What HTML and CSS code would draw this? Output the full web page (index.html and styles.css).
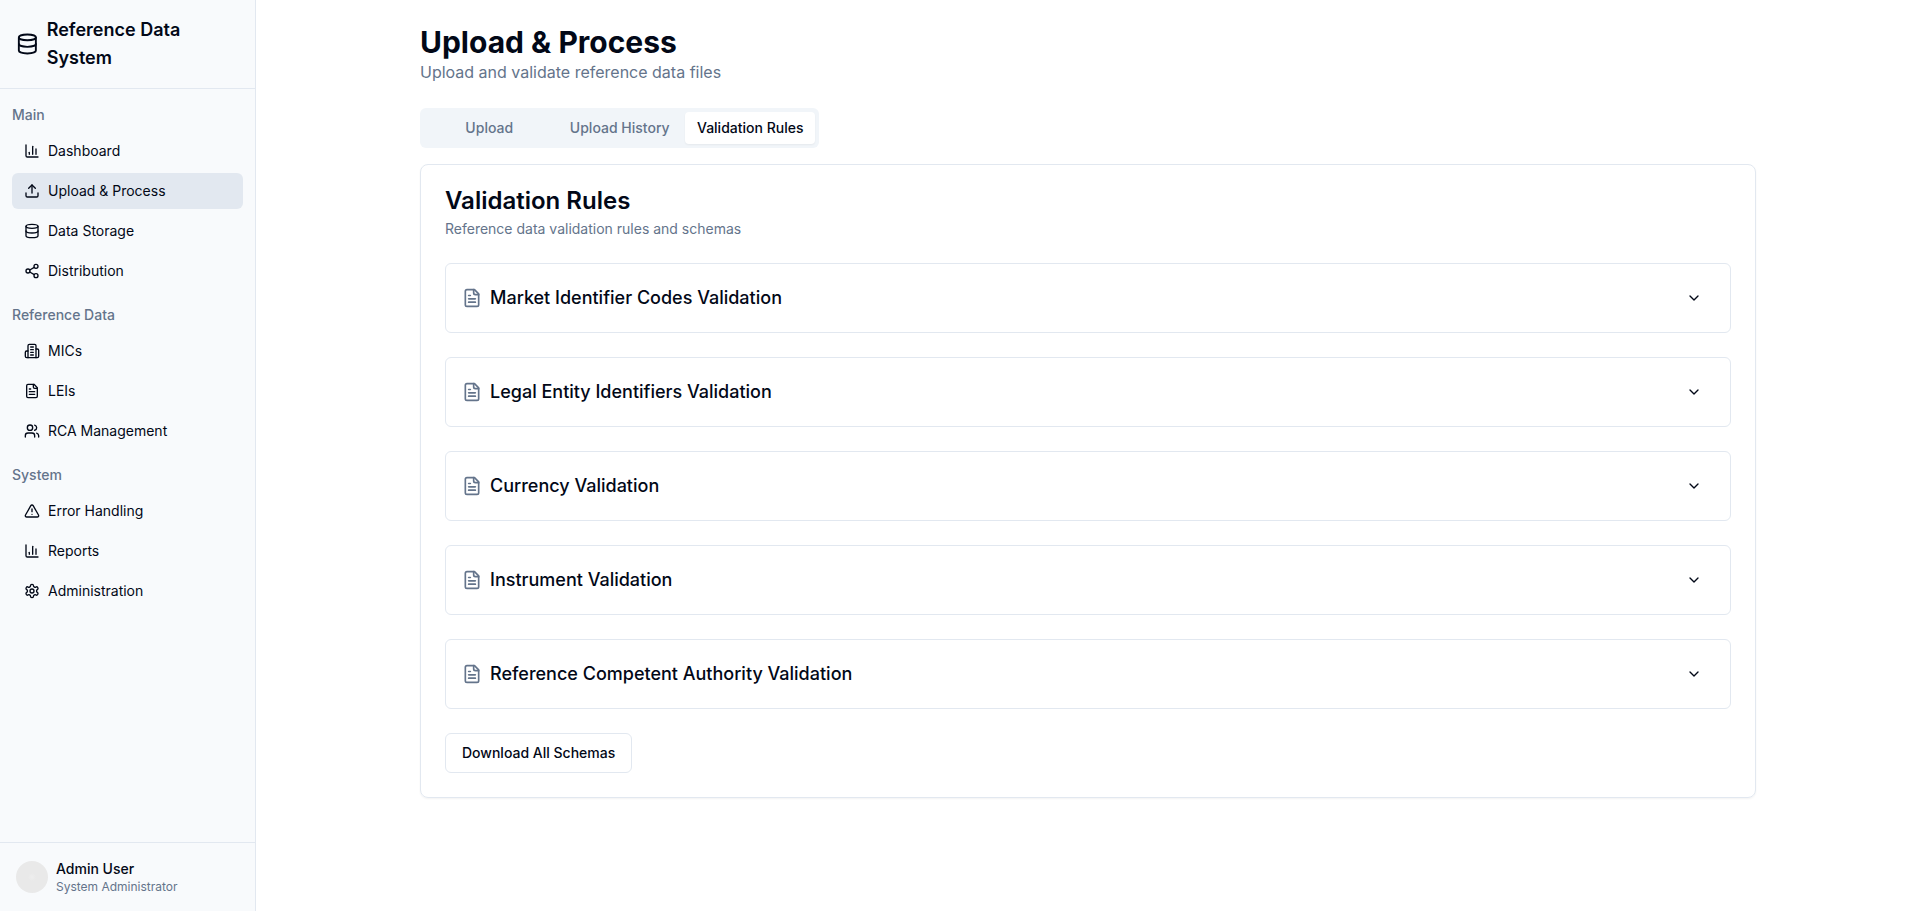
FILE: index.html
```html
<!DOCTYPE html>
<html lang="en">
<head>
<meta charset="utf-8">
<meta name="viewport" content="width=device-width, initial-scale=1">
<title>Reference Data System</title>
<link rel="stylesheet" href="styles.css">
</head>
<body>
<svg class="sprite" aria-hidden="true">
  <symbol id="database" viewBox="0 0 24 24"><ellipse cx="12" cy="5" rx="9" ry="3"/><path d="M3 5V19A9 3 0 0 0 21 19V5"/><path d="M3 12A9 3 0 0 0 21 12"/></symbol>
  <symbol id="chart" viewBox="0 0 24 24"><path d="M3 3v16a2 2 0 0 0 2 2h16"/><path d="M18 17V9"/><path d="M13 17V5"/><path d="M8 17v-3"/></symbol>
  <symbol id="upload" viewBox="0 0 24 24"><path d="M21 15v4a2 2 0 0 1-2 2H5a2 2 0 0 1-2-2v-4"/><path d="m17 8-5-5-5 5"/><path d="M12 3v12"/></symbol>
  <symbol id="share" viewBox="0 0 24 24"><circle cx="18" cy="5" r="3"/><circle cx="6" cy="12" r="3"/><circle cx="18" cy="19" r="3"/><path d="m8.59 13.51 6.83 3.98"/><path d="m15.41 6.51-6.82 3.98"/></symbol>
  <symbol id="building" viewBox="0 0 24 24"><path d="M6 22V4a2 2 0 0 1 2-2h8a2 2 0 0 1 2 2v18Z"/><path d="M6 12H4a2 2 0 0 0-2 2v6a2 2 0 0 0 2 2h2"/><path d="M18 9h2a2 2 0 0 1 2 2v9a2 2 0 0 1-2 2h-2"/><path d="M10 6h4"/><path d="M10 10h4"/><path d="M10 14h4"/><path d="M10 18h4"/></symbol>
  <symbol id="file" viewBox="0 0 24 24"><path d="M15 2H6a2 2 0 0 0-2 2v16a2 2 0 0 0 2 2h12a2 2 0 0 0 2-2V7Z"/><path d="M14 2v4a2 2 0 0 0 2 2h4"/><path d="M10 9H8"/><path d="M16 13H8"/><path d="M16 17H8"/></symbol>
  <symbol id="users" viewBox="0 0 24 24"><path d="M16 21v-2a4 4 0 0 0-4-4H6a4 4 0 0 0-4 4v2"/><circle cx="9" cy="7" r="4"/><path d="M22 21v-2a4 4 0 0 0-3-3.87"/><path d="M16 3.13a4 4 0 0 1 0 7.75"/></symbol>
  <symbol id="users-round" viewBox="0 0 24 24"><path d="M18 21a8 8 0 0 0-16 0"/><circle cx="10" cy="8" r="5"/><path d="M22 20c0-3.37-2-6.5-4-8a5 5 0 0 0-.45-8.3"/></symbol>
  <symbol id="alert" viewBox="0 0 24 24"><path d="m21.73 18-8-14a2 2 0 0 0-3.48 0l-8 14A2 2 0 0 0 4 21h16a2 2 0 0 0 1.73-3"/><path d="M12 9v4"/><path d="M12 17h.01"/></symbol>
  <symbol id="settings" viewBox="0 0 24 24"><path d="M12.22 2h-.44a2 2 0 0 0-2 2v.18a2 2 0 0 1-1 1.73l-.43.25a2 2 0 0 1-2 0l-.15-.08a2 2 0 0 0-2.73.73l-.22.38a2 2 0 0 0 .73 2.73l.15.1a2 2 0 0 1 1 1.72v.51a2 2 0 0 1-1 1.74l-.15.09a2 2 0 0 0-.73 2.73l.22.38a2 2 0 0 0 2.73.73l.15-.08a2 2 0 0 1 2 0l.43.25a2 2 0 0 1 1 1.73V20a2 2 0 0 0 2 2h.44a2 2 0 0 0 2-2v-.18a2 2 0 0 1 1-1.73l.43-.25a2 2 0 0 1 2 0l.15.08a2 2 0 0 0 2.73-.73l.22-.39a2 2 0 0 0-.73-2.73l-.15-.08a2 2 0 0 1-1-1.74v-.5a2 2 0 0 1 1-1.74l.15-.09a2 2 0 0 0 .73-2.73l-.22-.38a2 2 0 0 0-2.73-.73l-.15.08a2 2 0 0 1-2 0l-.43-.25a2 2 0 0 1-1-1.73V4a2 2 0 0 0-2-2z"/><circle cx="12" cy="12" r="3"/></symbol>
  <symbol id="chevron" viewBox="0 0 24 24"><path d="m6 9 6 6 6-6"/></symbol>
</svg>
<div class="app">
  <aside class="sidebar">
    <div class="brand">
      <svg class="brand-icon"><use href="#database"/></svg>
      <span class="brand-name">Reference Data System</span>
    </div>
    <nav class="nav">
      <section class="nav-group">
        <h2 class="nav-label">Main</h2>
        <a class="nav-item" href="#dashboard"><svg class="icon"><use href="#chart"/></svg>Dashboard</a>
        <a class="nav-item active" href="#upload-process" aria-current="page"><svg class="icon"><use href="#upload"/></svg>Upload &amp; Process</a>
        <a class="nav-item" href="#storage"><svg class="icon"><use href="#database"/></svg>Data Storage</a>
        <a class="nav-item" href="#distribution"><svg class="icon"><use href="#share"/></svg>Distribution</a>
      </section>
      <section class="nav-group">
        <h2 class="nav-label">Reference Data</h2>
        <a class="nav-item" href="#mics"><svg class="icon"><use href="#building"/></svg>MICs</a>
        <a class="nav-item" href="#leis"><svg class="icon"><use href="#file"/></svg>LEIs</a>
        <a class="nav-item" href="#rca"><svg class="icon"><use href="#users"/></svg>RCA Management</a>
      </section>
      <section class="nav-group">
        <h2 class="nav-label">System</h2>
        <a class="nav-item" href="#errors"><svg class="icon"><use href="#alert"/></svg>Error Handling</a>
        <a class="nav-item" href="#reports"><svg class="icon"><use href="#chart"/></svg>Reports</a>
        <a class="nav-item" href="#administration"><svg class="icon"><use href="#settings"/></svg>Administration</a>
      </section>
    </nav>
    <div class="user">
      <span class="avatar"></span>
      <div class="user-text">
        <p class="user-name">Admin User</p>
        <p class="user-role">System Administrator</p>
      </div>
    </div>
  </aside>
  <main class="main">
    <div class="container">
      <header class="page-header">
        <h1 class="page-title">Upload &amp; Process</h1>
        <p class="page-subtitle">Upload and validate reference data files</p>
      </header>
      <div class="tabs" role="tablist">
        <button class="tab" type="button" role="tab" aria-selected="false">Upload</button>
        <button class="tab" type="button" role="tab" aria-selected="false">Upload History</button>
        <button class="tab selected" type="button" role="tab" aria-selected="true">Validation Rules</button>
      </div>
      <section class="card">
        <header class="card-header">
          <h2 class="card-title">Validation Rules</h2>
          <p class="card-subtitle">Reference data validation rules and schemas</p>
        </header>
        <div class="rules">
          <div class="rule"><svg class="rule-icon"><use href="#file"/></svg><h3 class="rule-name">Market Identifier Codes Validation</h3><button class="toggle" type="button" aria-label="Expand Market Identifier Codes Validation"><svg class="icon"><use href="#chevron"/></svg></button></div>
          <div class="rule"><svg class="rule-icon"><use href="#file"/></svg><h3 class="rule-name">Legal Entity Identifiers Validation</h3><button class="toggle" type="button" aria-label="Expand Legal Entity Identifiers Validation"><svg class="icon"><use href="#chevron"/></svg></button></div>
          <div class="rule"><svg class="rule-icon"><use href="#file"/></svg><h3 class="rule-name">Currency Validation</h3><button class="toggle" type="button" aria-label="Expand Currency Validation"><svg class="icon"><use href="#chevron"/></svg></button></div>
          <div class="rule"><svg class="rule-icon"><use href="#file"/></svg><h3 class="rule-name">Instrument Validation</h3><button class="toggle" type="button" aria-label="Expand Instrument Validation"><svg class="icon"><use href="#chevron"/></svg></button></div>
          <div class="rule"><svg class="rule-icon"><use href="#file"/></svg><h3 class="rule-name">Reference Competent Authority Validation</h3><button class="toggle" type="button" aria-label="Expand Reference Competent Authority Validation"><svg class="icon"><use href="#chevron"/></svg></button></div>
          <button class="download" type="button">Download All Schemas</button>
        </div>
      </section>
    </div>
  </main>
</div>
</body>
</html>
```
FILE: styles.css
```css
:root {
  --ink: #020817;
  --muted: #64748b;
  --line: #e2e8f0;
  --panel: #f8fafc;
  --soft: #f1f5f9;
}

*,
*::before,
*::after {
  box-sizing: border-box;
}

body {
  margin: 0;
  background: #fff;
  color: var(--ink);
  font-family: Inter, "Liberation Sans", sans-serif;
  font-size: 16px;
  line-height: 24px;
}

h1, h2, h3, p {
  margin: 0;
}

button {
  font: inherit;
  color: inherit;
  cursor: pointer;
}

svg {
  display: block;
  fill: none;
  stroke: currentColor;
  stroke-width: 2;
  stroke-linecap: round;
  stroke-linejoin: round;
}

.sprite {
  display: none;
}

.icon {
  flex: none;
  width: 16px;
  height: 16px;
}

.app {
  display: flex;
  min-height: 100vh;
}

/* Sidebar */
.sidebar {
  display: flex;
  flex: none;
  flex-direction: column;
  width: 256px;
  border-right: 1px solid var(--line);
  background: var(--panel);
}

.brand {
  display: flex;
  align-items: center;
  gap: 8px;
  padding: 16px;
  border-bottom: 1px solid var(--line);
}

.brand-icon {
  width: 24px;
  height: 24px;
}

.brand-name {
  font-size: 18px;
  font-weight: 600;
  line-height: 28px;
}

.nav {
  display: flex;
  flex: 1;
  flex-direction: column;
  gap: 16px;
  padding: 16px 12px;
}

.nav-group {
  display: flex;
  flex-direction: column;
  gap: 4px;
}

.nav-label {
  margin-bottom: 4px;
  color: var(--muted);
  font-size: 14px;
  font-weight: 500;
  line-height: 20px;
}

.nav-item {
  display: flex;
  align-items: center;
  gap: 8px;
  padding: 8px 12px;
  border-radius: 6px;
  color: inherit;
  font-size: 14px;
  line-height: 20px;
  text-decoration: none;
}

.nav-item.active {
  background: var(--line);
}

.user {
  display: flex;
  align-items: center;
  gap: 8px;
  padding: 16px;
  border-top: 1px solid var(--line);
}

.avatar {
  width: 32px;
  height: 32px;
  border-radius: 50%;
  background: radial-gradient(circle, #eeeeee 0, #e9e9e9 4px);
}

.user-name {
  font-size: 14px;
  font-weight: 500;
  line-height: 20px;
}

.user-role {
  color: var(--muted);
  font-size: 12px;
  line-height: 16px;
}

/* Page */
.main {
  flex: 1;
  min-width: 0;
}

.container {
  display: flex;
  flex-direction: column;
  max-width: 1400px;
  margin: 0 auto;
  padding: 24px 32px;
}

.page-header {
  margin-bottom: 24px;
}

.page-title {
  font-size: 30px;
  font-weight: 700;
  line-height: 36px;
}

.page-subtitle {
  color: var(--muted);
}

.tabs {
  display: grid;
  grid-template-columns: repeat(3, 1fr);
  align-self: flex-start;
  margin-bottom: 16px;
  padding: 4px;
  border-radius: 6px;
  background: var(--soft);
}

.tab {
  padding: 6px 12px;
  border: 0;
  border-radius: 4px;
  background: transparent;
  color: var(--muted);
  font-size: 14px;
  font-weight: 500;
  line-height: 20px;
}

.tab.selected {
  background: #fff;
  color: var(--ink);
  box-shadow: 0 1px 2px rgb(0 0 0 / 5%);
}

.card {
  padding: 24px;
  border: 1px solid var(--line);
  border-radius: 8px;
  box-shadow: 0 1px 2px rgb(0 0 0 / 5%);
}

.card-header {
  display: flex;
  flex-direction: column;
  gap: 6px;
  margin-bottom: 24px;
}

.card-title {
  font-size: 24px;
  font-weight: 600;
  line-height: 24px;
}

.card-subtitle {
  color: var(--muted);
  font-size: 14px;
  line-height: 20px;
}

.rules {
  display: flex;
  flex-direction: column;
  gap: 24px;
}

.rule {
  display: flex;
  align-items: center;
  gap: 8px;
  padding: 16px;
  border: 1px solid var(--line);
  border-radius: 6px;
}

.rule-icon {
  flex: none;
  width: 20px;
  height: 20px;
  color: var(--muted);
}

.rule-name {
  flex: 1;
  font-size: 18px;
  font-weight: 500;
  line-height: 28px;
}

.toggle {
  padding: 10px 12px;
  border: 0;
  border-radius: 6px;
  background: transparent;
}

.download {
  align-self: flex-start;
  padding: 9px 16px;
  border: 1px solid var(--line);
  border-radius: 6px;
  background: #fff;
  font-size: 14px;
  font-weight: 500;
  line-height: 20px;
}
```
